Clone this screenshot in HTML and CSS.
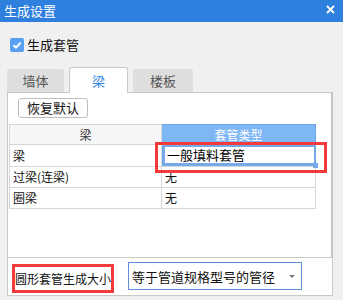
FILE: index.html
```html
<!DOCTYPE html>
<html lang="zh">
<head>
    <meta charset="UTF-8">
    <title>生成设置</title>
    <link rel="stylesheet" href="styles.css">
</head>
<body>

    <div class="dialog">
        <div class="titlebar">
            <span class="title">生成设置</span>
            <svg class="close" width="9" height="9" viewBox="0 0 9 9">
                <path d="M1 1 L8 8 M8 1 L1 8" stroke="#fff" stroke-width="1.8" fill="none"/>
            </svg>
        </div>

        <div class="body">
            <label class="check">
                <span class="box">
                    <svg width="14" height="14" viewBox="0 0 14 14">
                        <path d="M3.5 7.2 L6 9.6 L10.6 4.6" stroke="#fff" stroke-width="2" fill="none"/>
                    </svg>
                </span>
                生成套管
            </label>

            <div class="tabs">
                <div class="tab t1">墙体</div>
                <div class="tab t2 active">梁</div>
                <div class="tab t3">楼板</div>
            </div>

            <div class="panel">
                <div class="tools">
                    <button class="reset">恢复默认</button>
                </div>
                <table class="grid">
                    <tr>
                        <th class="c1">梁</th>
                        <th class="c2 sel">套管类型</th>
                    </tr>
                    <tr>
                        <td>梁</td>
                        <td class="editing">
                            <div class="editor">一般填料套管</div>
                            <span class="mark"></span>
                        </td>
                    </tr>
                    <tr>
                        <td>过梁(连梁)</td>
                        <td>无</td>
                    </tr>
                    <tr>
                        <td>圈梁</td>
                        <td>无</td>
                    </tr>
                </table>
            </div>

            <div class="footer">
                <div class="size-label">圆形套管生成大小</div>
                <div class="select">
                    <span>等于管道规格型号的管径</span>
                    <span class="arrow"></span>
                </div>
            </div>
        </div>
    </div>

</body>
</html>
```

FILE: styles.css
```css
/* General Styling */
body {
    margin: 0;
    background: #f0f0f0;
    font-family: "Noto Sans CJK SC", sans-serif;
    font-size: 12px;
    color: #111;
}

.dialog {
    width: 343px;
    height: 300px;
    overflow: hidden;
}

.titlebar {
    height: 22px;
    background: #2e7fde;
    display: flex;
    align-items: center;
    justify-content: space-between;
    padding: 0 8px 0 4px;
}

.title {
    color: white;
    font-size: 13px;
    line-height: 22px;
}

.close {
    margin-top: -3px;
}

.body {
    padding: 0;
}

/* checkbox */
.check {
    display: flex;
    align-items: center;
    height: 14px;
    margin: 16px 0 0 10px;
    line-height: 14px;
    font-size: 13px;
}

.box {
    width: 14px;
    height: 14px;
    background: #5aa0f2;
    border-radius: 2px;
    margin-right: 3px;
    display: flex;
}

/* tabs */
.tabs {
    display: flex;
    align-items: flex-end;
    height: 26px;
    margin-top: 14px;
    padding-left: 7px;
}

.tab {
    height: 23px;
    line-height: 23px;
    text-align: center;
    background: #dedede;
    border-radius: 3px 3px 0 0;
    color: #555;
    font-size: 13px;
}

.t1 { width: 57px; }
.t2 { width: 59px; margin-left: 5px; }
.t3 { width: 60px; margin-left: 5px; }

.tab.active {
    position: relative;
    z-index: 1;
    height: 26px;
    line-height: 25px;
    margin-bottom: -1px;
    background: white;
    border: 1px solid #c8c8c8;
    border-bottom: none;
    box-sizing: border-box;
    color: #2f86e6;
}

/* panel */
.panel {
    margin-left: 7px;
    width: 326px;
    height: 166px;
    box-sizing: border-box;
    background: white;
    border: 1px solid #c8c8c8;
    border-right: 2px solid #c4c4c4;
}

.tools {
    padding: 5px 0 0 10px;
    height: 20px;
}

.reset {
    width: 70px;
    height: 20px;
    padding: 0;
    background: white;
    border: 1px solid #bdbdbd;
    border-radius: 3px;
    font-family: inherit;
    font-size: 13px;
    line-height: 18px;
    color: #111;
}

.grid {
    margin: 6px 0 0 1px;
    border-collapse: collapse;
    width: 307px;
    table-layout: fixed;
}

.grid th, .grid td {
    border: 1px solid #d6d6d6;
    padding: 0 3px;
    font-weight: normal;
    text-align: left;
    height: 20px;
    line-height: 20px;
}

.grid th {
    height: 19px;
    line-height: 19px;
    text-align: center;
    background: #f6f6f6;
    color: #333;
}

.grid .c1 { width: 145px; }

.grid th.sel {
    background: #7eb6f6;
    border-color: #6aa6ec;
    color: white;
}

.grid td.editing {
    position: relative;
    padding: 0;
}

.editor {
    height: 16px;
    line-height: 16px;
    margin: 0 -1px 0 0;
    padding-left: 2px;
    border: 2px solid #74aaea;
    border-left-width: 3px;
    border-bottom-width: 3px;
    color: #000;
    font-size: 13px;
}

.editor::after {
    content: "";
    position: absolute;
    right: -3px;
    bottom: -2px;
    width: 5px;
    height: 5px;
    background: #74aaea;
}

.mark {
    position: absolute;
    left: -7px;
    top: -3px;
    width: 172px;
    height: 31px;
    box-sizing: border-box;
    border: 3px solid #f43a3a;
}

/* bottom row */
.footer {
    margin-left: 7px;
    width: 326px;
    height: 38px;
    box-sizing: border-box;
    background: white;
    border: 1px solid #c8c8c8;
    border-top: none;
    display: flex;
    align-items: flex-start;
    padding: 4px 0 0 4px;
}

.size-label {
    margin-top: 2px;
    height: 29px;
    box-sizing: border-box;
    border: 3px solid #f43a3a;
    padding: 0 0 0 0;
    line-height: 23px;
    font-size: 12px;
    width: 102px;
}

.select {
    margin-left: 14px;
    width: 174px;
    height: 28px;
    box-sizing: border-box;
    border: 1px solid #5b8fdc;
    display: flex;
    align-items: center;
    justify-content: space-between;
    padding: 0 6px 0 3px;
    font-size: 13px;
}

.arrow {
    width: 0;
    height: 0;
    border-left: 3px solid transparent;
    border-right: 3px solid transparent;
    border-top: 3px solid #777;
}
```
